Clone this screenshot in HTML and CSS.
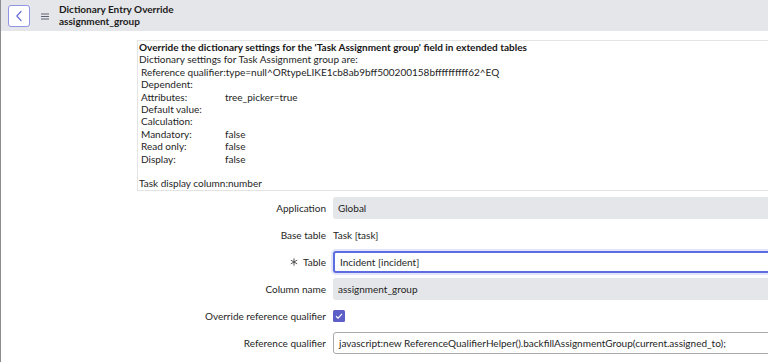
FILE: index.html
```html
<!DOCTYPE html>
<html>
<head>
<meta charset="utf-8">
<link rel="stylesheet" href="styles.css">
</head>
<body>
<div class="page">
  <header class="topbar">
    <button class="back" aria-label="Back">
      <svg width="8" height="12" viewBox="0 0 8 12"><path d="M6 1.5 L1.8 6 L6 10.5" fill="none" stroke="#6a6fd6" stroke-width="1.2" stroke-linecap="round" stroke-linejoin="round"/></svg>
    </button>
    <span class="menu">
      <svg width="8" height="7" viewBox="0 0 8 7"><path d="M0 1h8M0 3.5h8M0 6h8" stroke="#5f6272" stroke-width="1"/></svg>
    </span>
    <div class="title">
      <div>Dictionary Entry Override</div>
      <div>assignment_group</div>
    </div>
  </header>

  <main class="content">
    <section class="info">
      <div class="line strong">Override the dictionary settings for the 'Task Assignment group' field in extended tables</div>
      <div class="line">Dictionary settings for Task Assignment group are:</div>
      <div class="line ind">Reference qualifier:type=null^ORtypeLIKE1cb8ab9bff500200158bffffffffff62^EQ</div>
      <div class="line ind">Dependent:</div>
      <div class="line ind kv"><span class="k">Attributes:</span><span>tree_picker=true</span></div>
      <div class="line ind kv"><span class="k">Default value:</span><span></span></div>
      <div class="line ind kv"><span class="k">Calculation:</span><span></span></div>
      <div class="line ind kv"><span class="k">Mandatory:</span><span>false</span></div>
      <div class="line ind kv"><span class="k">Read only:</span><span>false</span></div>
      <div class="line ind kv"><span class="k">Display:</span><span>false</span></div>
      <div class="line">&nbsp;</div>
      <div class="line">Task display column:number</div>
    </section>

    <section class="form">
      <div class="row">
        <label class="lbl">Application</label>
        <div class="field ro">Global</div>
      </div>
      <div class="row">
        <label class="lbl">Base table</label>
        <div class="plain">Task [task]</div>
      </div>
      <div class="row">
        <label class="lbl"><svg class="req" width="8" height="8" viewBox="0 0 8 8"><path d="M4 0.3v7.4M0.8 2.15l6.4 3.7M0.8 5.85l6.4-3.7" stroke="#444" stroke-width="0.9"/></svg>Table</label>
        <div class="field focus">Incident [incident]</div>
      </div>
      <div class="row">
        <label class="lbl">Column name</label>
        <div class="field ro">assignment_group</div>
      </div>
      <div class="row">
        <label class="lbl">Override reference qualifier</label>
        <div class="check">
          <svg width="12" height="12" viewBox="0 0 12 12"><rect x="0" y="0" width="12" height="12" rx="1.5" fill="#5b5fc7"/><path d="M3 6.2 L5.1 8.2 L9 3.8" fill="none" stroke="#fff" stroke-width="1.2"/></svg>
        </div>
      </div>
      <div class="row">
        <label class="lbl">Reference qualifier</label>
        <div class="field edit">javascript:new ReferenceQualifierHelper().backfillAssignmentGroup(current.assigned_to);</div>
      </div>
    </section>
  </main>
</div>
</body>
</html>
```
FILE: styles.css
```css
* { box-sizing: border-box; }
html, body {
  margin: 0;
  padding: 0;
  width: 768px;
  height: 362px;
  overflow: hidden;
  background: #fff;
}
body {
  font-family: Lato, "Open Sans", sans-serif;
  font-size: 10px;
  color: #1f1f1f;
}
.page {
  border-left: 1px solid #8c8c8c;
  height: 362px;
  width: 768px;
  overflow: hidden;
}
.topbar {
  height: 31px;
  background: #e5e6e9;
  display: flex;
  align-items: center;
  padding-left: 7px;
}
.back {
  width: 22px;
  height: 22px;
  margin: 0;
  padding: 0;
  border: 1px solid #9094e4;
  border-radius: 3px;
  background: #fff;
  display: flex;
  align-items: center;
  justify-content: center;
}
.menu {
  display: flex;
  margin-left: 11px;
  margin-top: 1px;
}
.title {
  margin-left: 10px;
  font-weight: 700;
  font-size: 10px;
  line-height: 11.5px;
  color: #1c1c1c;
}
.content {
  padding-left: 136px;
  padding-top: 9px;
}
.info {
  border-top: 1px solid #e4e4e4;
  border-left: 1px solid #e4e4e4;
  border-bottom: 1px solid #e4e4e4;
  padding: 0 1px;
  width: 700px;
}
.line {
  line-height: 12.4px;
  white-space: nowrap;
  color: #1e1e1e;
}
.strong { font-weight: 700; color: #161616; }
.ind { padding-left: 2px; }
.kv { display: flex; }
.kv .k { width: 84px; }
.form {
  display: flex;
  flex-direction: column;
  gap: 5px;
  margin-top: 6px;
}
.row {
  display: grid;
  grid-template-columns: 189px 480px;
  column-gap: 7px;
  height: 22px;
  align-items: center;
}
.lbl {
  text-align: right;
  color: #262626;
  white-space: nowrap;
  display: flex;
  justify-content: flex-end;
  align-items: center;
}
.req { margin-right: 5px; }
.field {
  height: 22px;
  border-radius: 3px;
  padding-left: 5px;
  display: flex;
  align-items: center;
  white-space: nowrap;
  color: #1e1e1e;
}
.ro {
  background: #e5e6e9;
}
.plain { color: #1e1e1e; }
.focus {
  border: 2px solid #5d6ce0;
  box-shadow: 0 0 0 2px #e2e5fa;
  background: #fff;
}
.edit {
  border: 1px solid #a9a9a9;
  background: #fff;
}
.check { display: flex; align-items: center; }
```
